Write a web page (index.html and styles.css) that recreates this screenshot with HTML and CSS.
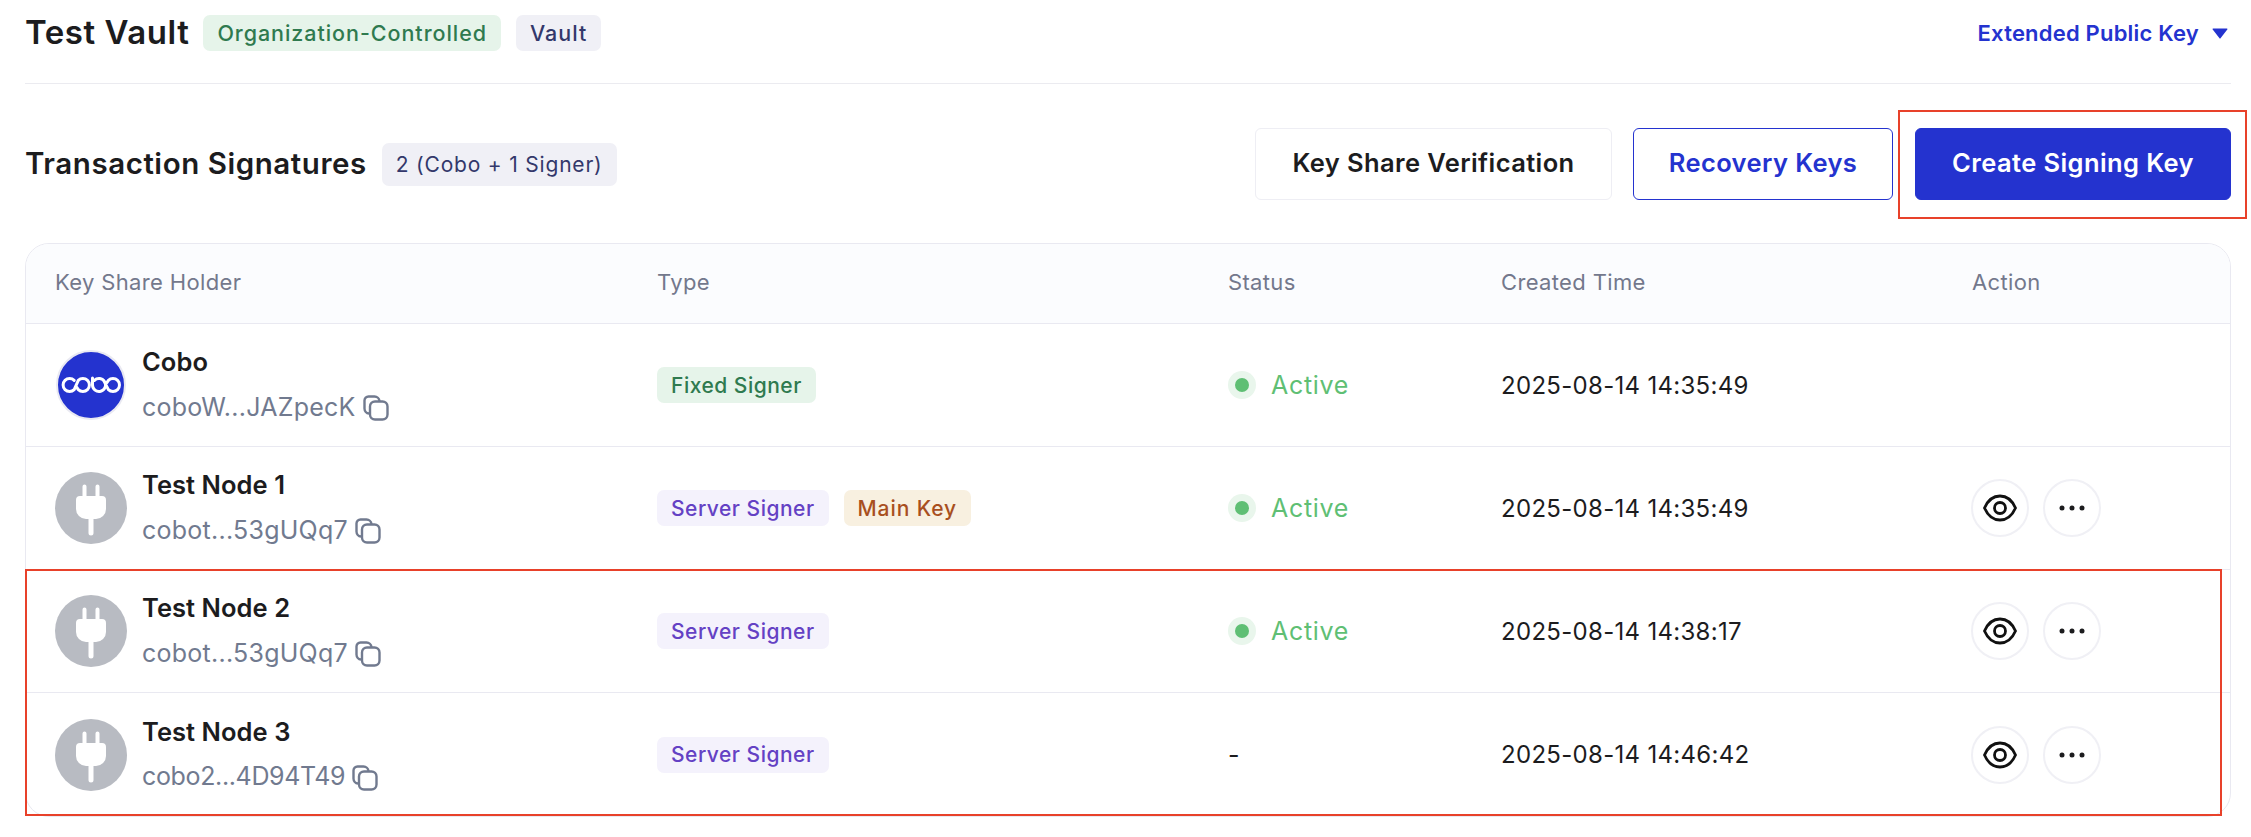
FILE: index.html
```html
<!DOCTYPE html>
<html lang="en">
<head>
<meta charset="utf-8">
<title>Test Vault</title>
<link rel="stylesheet" href="styles.css">
</head>
<body>
<svg class="defs" width="0" height="0" aria-hidden="true">
  <symbol id="plug" viewBox="0 0 72 72">
    <path d="M27.500 14.500a2 2 0 0 1 4 0V24h9v-9.500a2 2 0 0 1 4 0V24h2.500a4 4 0 0 1 4 4v9a10 10 0 0 1-10 10h-2.500v14a2.500 2.500 0 0 1-5 0V47H31a10 10 0 0 1-10-10v-9a4 4 0 0 1 4-4h2.500z" fill="#fff"/>
  </symbol>
  <symbol id="copy" viewBox="0 0 28 28">
    <path d="M7 19.500A5 5 0 0 1 2.500 14.500V6.500a4 4 0 0 1 4-4h6a5 5 0 0 1 5 4.500" fill="none" stroke="currentColor" stroke-width="2.400"/>
    <rect x="8" y="7.500" width="17.500" height="18" rx="5" fill="none" stroke="currentColor" stroke-width="2.400"/>
  </symbol>
  <symbol id="eye" viewBox="0 0 34 28">
    <path d="M1.500 14C5 6 11 2 17 2s12 4 15.500 12C29 22 23 26 17 26S5 22 1.500 14z" fill="none" stroke="currentColor" stroke-width="2.800"/>
    <circle cx="17" cy="14" r="5.500" fill="none" stroke="currentColor" stroke-width="2.800"/>
  </symbol>
  <symbol id="dots" viewBox="0 0 26 6">
    <circle cx="3" cy="3" r="2.500" fill="currentColor"/><circle cx="13" cy="3" r="2.500" fill="currentColor"/><circle cx="23" cy="3" r="2.500" fill="currentColor"/>
  </symbol>
</svg>

<main class="page">
  <header class="top">
    <h1 class="title">Test Vault</h1>
    <span class="tag tag-green tag-org">Organization-Controlled</span>
    <span class="tag tag-slate tag-vault">Vault</span>
    <a class="xpub">Extended Public Key<svg class="caret" viewBox="0 0 16 11"><path d="M1.200 0.500h13.600a0.700 0.700 0 0 1 0.500 1.100L8.500 10.300a0.600 0.600 0 0 1-1 0L0.700 1.600a0.700 0.700 0 0 1 0.500-1.100z" fill="currentColor"/></svg></a>
  </header>

  <section class="bar">
    <h2 class="subtitle">Transaction Signatures</h2>
    <span class="tag tag-slate tag-count">2 (Cobo + 1 Signer)</span>
    <div class="actions">
      <button class="btn btn-plain">Key Share Verification</button>
      <button class="btn btn-outline">Recovery Keys</button>
      <div class="marked">
        <button class="btn btn-primary">Create Signing Key</button>
        <span class="mark mark-btn"></span>
      </div>
    </div>
  </section>

  <section class="table">
    <div class="row head">
      <div>Key Share Holder</div><div>Type</div><div>Status</div><div>Created Time</div><div>Action</div>
    </div>

    <div class="row">
      <div class="holder">
        <svg class="avatar logo" viewBox="0 0 72 72">
          <circle cx="36" cy="36" r="34" fill="#2433cf" stroke="#e9e9f2" stroke-width="2"/>
          <path d="M19.200 31.400A6.500 6.500 0 1 0 19.200 40.600L23.300 31.400A6.500 6.500 0 1 1 23.300 40.600L21.800 38.400M37.500 29V36A6.500 6.500 0 1 0 39.400 31.400M48.600 31.400L53.400 40.600A6.500 6.500 0 1 0 53.400 31.400L51.900 33.600" fill="none" stroke="#fff" stroke-width="3" stroke-linecap="round" stroke-linejoin="round"/>
        </svg>
        <div class="who">
          <div class="name">Cobo</div>
          <div class="addr">coboW...JAZpecK<svg class="copy"><use href="#copy"/></svg></div>
        </div>
      </div>
      <div class="tags"><span class="tag tag-green tag-fixed">Fixed Signer</span></div>
      <div class="status"><span class="dot"></span>Active</div>
      <div class="time">2025-08-14 14:35:49</div>
      <div></div>
    </div>

    <div class="row">
      <div class="holder">
        <div class="avatar plug"><svg><use href="#plug"/></svg></div>
        <div class="who">
          <div class="name">Test Node 1</div>
          <div class="addr">cobot...53gUQq7<svg class="copy"><use href="#copy"/></svg></div>
        </div>
      </div>
      <div class="tags"><span class="tag tag-purple">Server Signer</span><span class="tag tag-orange">Main Key</span></div>
      <div class="status"><span class="dot"></span>Active</div>
      <div class="time">2025-08-14 14:35:49</div>
      <div class="acts">
        <button class="round"><svg class="eye"><use href="#eye"/></svg></button>
        <button class="round"><svg class="dots"><use href="#dots"/></svg></button>
      </div>
    </div>

    <div class="marked-rows">
      <div class="row">
        <div class="holder">
          <div class="avatar plug"><svg><use href="#plug"/></svg></div>
          <div class="who">
            <div class="name">Test Node 2</div>
            <div class="addr">cobot...53gUQq7<svg class="copy"><use href="#copy"/></svg></div>
          </div>
        </div>
        <div class="tags"><span class="tag tag-purple">Server Signer</span></div>
        <div class="status"><span class="dot"></span>Active</div>
        <div class="time">2025-08-14 14:38:17</div>
        <div class="acts">
          <button class="round"><svg class="eye"><use href="#eye"/></svg></button>
          <button class="round"><svg class="dots"><use href="#dots"/></svg></button>
        </div>
      </div>

      <div class="row">
        <div class="holder">
          <div class="avatar plug"><svg><use href="#plug"/></svg></div>
          <div class="who">
            <div class="name">Test Node 3</div>
            <div class="addr addr-tight">cobo2...4D94T49<svg class="copy"><use href="#copy"/></svg></div>
          </div>
        </div>
        <div class="tags"><span class="tag tag-purple">Server Signer</span></div>
        <div class="status plain">-</div>
        <div class="time">2025-08-14 14:46:42</div>
        <div class="acts">
          <button class="round"><svg class="eye"><use href="#eye"/></svg></button>
          <button class="round"><svg class="dots"><use href="#dots"/></svg></button>
        </div>
      </div>
      <span class="mark mark-rows"></span>
    </div>
  </section>
</main>
</body>
</html>
```

FILE: styles.css
```css
* { box-sizing: border-box; }
html, body { margin: 0; padding: 0; background: #fff; }
body { font-family: Inter, "Noto Sans", sans-serif; color: #1c1c1e; overflow: hidden; }
.defs { position: absolute; }
.page { margin-left: 25px; width: 2206px; }

/* top */
.top { display: flex; align-items: center; height: 84px; padding-bottom: 17px; border-bottom: 1px solid #ebebf0; }
.title { margin: -2px 14px 0 0; font-size: 33px; font-weight: 600; letter-spacing: 0.550px; line-height: 36px; }
.tag { display: inline-flex; align-items: center; height: 36px; padding: 0 14px; border-radius: 7px; font-size: 21px; font-weight: 500; letter-spacing: 0.500px; white-space: nowrap; }
.tag-green { background: #e6f4ea; color: #2f7a4f; }
.tag-slate { background: #f0f0f6; color: #33386b; }
.tag-purple { background: #f4f2fc; color: #6441c4; }
.tag-orange { background: #f8f0e0; color: #a84f1e; letter-spacing: 0.900px; }
.tag-org { font-size: 21.500px; letter-spacing: 0.950px; }
.tag-vault { margin-left: 15px; font-size: 21.500px; letter-spacing: 1px; }
.xpub { margin-left: auto; display: flex; align-items: center; gap: 13px; padding-right: 3px; color: #2433cf; font-size: 22px; font-weight: 600; letter-spacing: 0.200px; }
.caret { width: 16px; height: 11px; }

/* section bar */
.bar { display: flex; align-items: center; height: 159px; padding: 4px 0 3px; }
.subtitle { margin: -3px 15px 0 0; font-size: 29.500px; font-weight: 600; letter-spacing: 0.550px; line-height: 36px; }
.tag-count { height: 43px; font-weight: 400; letter-spacing: 0.800px; }
.actions { margin-left: auto; display: flex; gap: 21px; }
.btn { height: 72px; border-radius: 6px; font-family: inherit; font-size: 25.500px; font-weight: 600; letter-spacing: 0.400px; background: #fff; border: 1.500px solid transparent; padding: 0 0 3px; }
.btn-plain { width: 357px; border-color: #eeeef4; color: #1c1c1e; }
.btn-outline { width: 260px; border-color: #2433cf; color: #2433cf; }
.btn-primary { width: 316px; background: #2433cf; border-color: #2433cf; color: #fff; }
.marked { position: relative; margin-left: 1px; }
.mark { position: absolute; border: 2px solid #e8412a; pointer-events: none; }
.mark-btn { left: -17px; right: -16px; top: -18px; bottom: -19px; }

/* table */
.table { border: 1px solid #e9e9f1; border-radius: 24px; }
.row { display: grid; grid-template-columns: 602px 571px 273px 471px 1fr; align-items: center; height: 123px; padding-left: 29px; border-bottom: 1px solid #e9e9f1; }
.row.head { height: 80px; background: #fbfcfe; border-radius: 23px 23px 0 0; color: #73788c; font-size: 22px; letter-spacing: 0.350px; padding-bottom: 3px; }
.marked-rows { position: relative; }
.marked-rows .row:last-of-type { border-bottom: 0; }
.mark-rows { left: -1px; right: 8px; top: -1px; bottom: 0; }

.holder { display: flex; align-items: center; gap: 15px; }
.avatar { width: 72px; height: 72px; flex: none; }
.plug { border-radius: 50%; background: #b8bbc2; }
.plug svg { width: 72px; height: 72px; display: block; }
.who { display: flex; flex-direction: column; gap: 14px; margin-top: -1px; }
.name { font-size: 25.500px; font-weight: 600; line-height: 30px; letter-spacing: 0.050px; }
.addr { display: flex; align-items: center; gap: 6px; font-size: 25px; line-height: 30px; letter-spacing: 0.250px; color: #717a8f; }
.addr-tight { letter-spacing: -0.350px; }
.copy { width: 28px; height: 28px; margin-top: 3px; color: #717a8f; }

.tags { display: flex; gap: 15px; }
.status { display: flex; align-items: center; gap: 15px; font-size: 25px; letter-spacing: 0.700px; color: #5fbf74; }
.status.plain { color: #1c1c1e; }
.dot { width: 28px; height: 28px; border-radius: 50%; background: #e9f6ec; display: flex; align-items: center; justify-content: center; }
.dot::before { content: ""; width: 14px; height: 14px; border-radius: 50%; background: #5fbf74; }
.time { font-size: 24px; letter-spacing: 0.300px; }
.acts { display: flex; gap: 14px; margin-left: -1px; }
.round { width: 58px; height: 58px; padding: 0; border-radius: 50%; border: 2px solid #f0f0f5; background: #fff; color: #111; display: flex; align-items: center; justify-content: center; }
.eye { width: 34px; height: 28px; }
.dots { width: 26px; height: 6px; color: #1c1c1e; }
```
